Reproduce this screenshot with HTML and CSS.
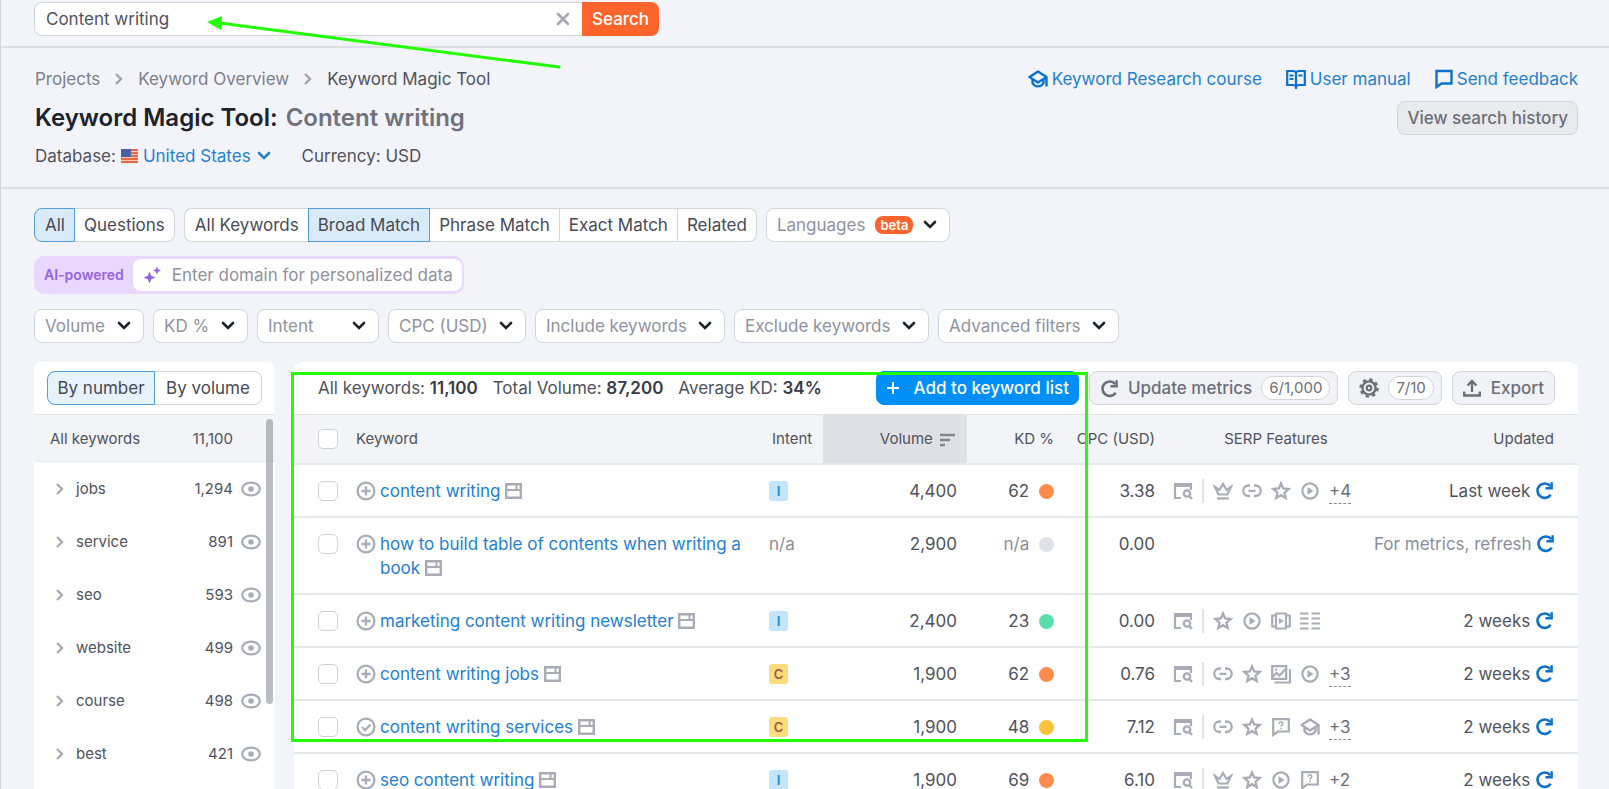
FILE: index.html
```
<!DOCTYPE html>
<html lang="en">
<head>
	<title>Keyword Magic Tool</title>
	<meta charset="utf-8">
	<link rel="stylesheet" href="styles.css">
</head>
<body>
	<!-- icon sprite -->
	<svg class="sprite" aria-hidden="true">
		<symbol id="chevron-right" viewBox="0 0 10 14"><path d="M2 2l5 5-5 5" fill="none" stroke="currentColor" stroke-width="2.400"/></symbol>
		<symbol id="chevron-down" viewBox="0 0 14 10"><path d="M2 2l5 5 5-5" fill="none" stroke="currentColor" stroke-width="2.6" stroke-linecap="round"/></symbol>
		<symbol id="close" viewBox="0 0 14 14"><path d="M2 2l10 10M12 2L2 12" stroke="currentColor" stroke-width="2.6" stroke-linecap="round"/></symbol>
		<symbol id="cap" viewBox="0 0 20 20"><path d="M1.5 8L10 2.500l8.500 5.500L10 13.500z M4.500 10.500v3.500c2.500 4.500 8.500 4.500 11 0v-3.500 M18.500 8v9.500" fill="none" stroke="currentColor" stroke-width="2.4" stroke-linejoin="round"/></symbol>
		<symbol id="book" viewBox="0 0 20 20"><path d="M1.200 2h6.300L10 3l2.500-1h6.300v14h-6.300L10 17l-2.500-1H1.200z M10 3v17" fill="none" stroke="currentColor" stroke-width="2.200"/><path d="M3.500 6.500h4M3.500 10h4M12.500 6.500h4" stroke="currentColor" stroke-width="2"/></symbol>
		<symbol id="bubble" viewBox="0 0 18 20"><path d="M1.500 2h15v12.500H6.500L1.500 18z" fill="none" stroke="currentColor" stroke-width="2.400"/></symbol>
		<symbol id="sparkle" viewBox="0 0 18 18"><path d="M6.500 5.500L8.300 9.700 12.500 11.500 8.300 13.300 6.500 17.500 4.700 13.300 0.500 11.500 4.700 9.700z M14 0.500L15.200 3.300 18 4.500 15.200 5.700 14 8.500 12.800 5.700 10 4.500 12.800 3.300z" fill="currentColor"/></symbol>
		<symbol id="eye" viewBox="0 0 20 16"><ellipse cx="10" cy="8" rx="8.800" ry="6.400" fill="none" stroke="currentColor" stroke-width="2.200"/><circle cx="10" cy="8" r="2.800" fill="currentColor"/></symbol>
		<symbol id="plus" viewBox="0 0 14 14"><path d="M7 1v12M1 7h12" stroke="currentColor" stroke-width="2"/></symbol>
		<symbol id="plus-circle" viewBox="0 0 20 20"><circle cx="10" cy="10" r="8.400" fill="none" stroke="currentColor" stroke-width="2.300"/><path d="M10 5.500v9M5.500 10h9" stroke="currentColor" stroke-width="2.300"/></symbol>
		<symbol id="check-circle" viewBox="0 0 20 20"><circle cx="10" cy="10" r="8.400" fill="none" stroke="currentColor" stroke-width="2.300"/><path d="M6 10l3 3 5.500-5.500" fill="none" stroke="currentColor" stroke-width="2.300"/></symbol>
		<symbol id="serp" viewBox="0 0 17 16"><path d="M1.200 1.200h14.600v13.600H1.200z" fill="none" stroke="currentColor" stroke-width="2.400"/><path d="M1 7h15M11.500 2v4" stroke="currentColor" stroke-width="2"/></symbol>
		<symbol id="refresh" viewBox="0 0 20 20"><path d="M16.500 14.500A7.600 7.600 0 1 1 16 5.300" fill="none" stroke="currentColor" stroke-width="2.800"/><path d="M18.800 1.200v7.800h-7.800v-2.600h5.200V1.200z" fill="currentColor"/></symbol>
		<symbol id="gear" viewBox="0 0 20 20"><circle cx="10" cy="10" r="6.600" fill="none" stroke="currentColor" stroke-width="2.400"/><circle cx="10" cy="10" r="8.500" fill="none" stroke="currentColor" stroke-width="2.400" stroke-dasharray="3.300 3.376"/><circle cx="10" cy="10" r="2.300" fill="none" stroke="currentColor" stroke-width="2.200"/></symbol>
		<symbol id="export" viewBox="0 0 18 18"><path d="M9 13V2.500M4.500 6.500L9 2l4.500 4.500M1.200 12.500v4h15.600v-4" fill="none" stroke="currentColor" stroke-width="2.400"/></symbol>
		<symbol id="sort" viewBox="0 0 16 14"><path d="M1 2h15M1 7h10M1 12h5" stroke="currentColor" stroke-width="2.400"/></symbol>
		<symbol id="serp-view" viewBox="0 0 20 18"><path d="M8 16H2V3h16v5" fill="none" stroke="currentColor" stroke-width="2.200"/><path d="M1 1h18v4H1z" fill="currentColor"/><circle cx="14" cy="11.500" r="3.200" fill="none" stroke="currentColor" stroke-width="2.300"/><path d="M16.300 14l2.700 3" stroke="currentColor" stroke-width="2.400"/></symbol>
		<symbol id="crown" viewBox="0 0 20 20"><path d="M2 6l3.500 7.500h9L18 6l-4.500 3L10 3 6.500 9z" fill="none" stroke="currentColor" stroke-width="2.200"/><path d="M4 17.500h12" stroke="currentColor" stroke-width="2.200"/></symbol>
		<symbol id="link" viewBox="0 0 20 20"><path d="M8 4.500H6.500a5 5 0 0 0 0 10.500H8M12 4.500h1.500a5 5 0 0 1 0 10.500H12M6.500 9.800h7" fill="none" stroke="currentColor" stroke-width="2.300"/></symbol>
		<symbol id="star" viewBox="0 0 20 20"><path d="M10 2.500l2.200 5 5.400.5-4.100 3.600 1.200 5.400L10 14.200 5.300 17l1.200-5.400L2.400 8l5.400-.5z" fill="none" stroke="currentColor" stroke-width="2.300"/></symbol>
		<symbol id="play" viewBox="0 0 20 20"><circle cx="10" cy="10" r="7.600" fill="none" stroke="currentColor" stroke-width="2.200"/><path d="M7.500 6v8l6-4z" fill="currentColor"/></symbol>
		<symbol id="carousel" viewBox="0 0 20 20"><path d="M5 2.500h10v15H5z M5 4.500H1.200v11H5M15 4.500h3.800v11H15" fill="none" stroke="currentColor" stroke-width="2.200" stroke-linejoin="round"/><path d="M8 7v6l5-3z" fill="currentColor"/></symbol>
		<symbol id="rows" viewBox="0 0 20 20"><path d="M0 2.500h8.500M0 7.500h8.500M0 12.500h8.500M0 17.500h8.500M11.500 2.500H20M11.500 7.500H20M11.500 12.500H20M11.500 17.500H20" stroke="currentColor" stroke-width="2.200"/></symbol>
		<symbol id="images" viewBox="0 0 20 20"><path d="M1.200 2.200h14v12.600h-14z M1.500 13l4-4 3 2.500 6-6.500M19 5v13.500H3.500" fill="none" stroke="currentColor" stroke-width="2.200"/><circle cx="5" cy="5.700" r="1.200" fill="currentColor"/></symbol>
		<symbol id="question" viewBox="0 0 20 20"><path d="M2.200 2.200h15.600v12.300H7L2.200 18z" fill="none" stroke="currentColor" stroke-width="2.200"/><path d="M8.200 6.700c0-2.200 3.600-2.200 3.600 0 0 1.400-1.800 1.200-1.800 2.800M10 10.700v1.500" fill="none" stroke="currentColor" stroke-width="1.600"/></symbol>
	</svg>

	<div class="page">
		<form class="search-bar">
			<div class="search-field">
				<input type="text" value="Content writing" aria-label="Keyword">
				<button type="button" class="clear" aria-label="Clear"><svg width="14" height="14"><use href="#close"/></svg></button>
			</div>
			<button type="button" class="search-btn">Search</button>
		</form>

		<header class="header">
			<div class="header-left">
				<nav class="breadcrumbs">
					<a href="#">Projects</a>
					<svg width="10" height="14"><use href="#chevron-right"/></svg>
					<a href="#">Keyword Overview</a>
					<svg width="10" height="14"><use href="#chevron-right"/></svg>
					<span class="current">Keyword Magic Tool</span>
				</nav>
				<h1>Keyword Magic Tool: <span>Content writing</span></h1>
				<div class="meta">
					<div class="database">
						Database:
						<svg class="flag" width="17" height="14" viewBox="0 0 17 14"><rect width="17" height="14" fill="#f7c9bb"/><path d="M0 1h17M0 4h17M0 7h17M0 10h17M0 13h17" stroke="#e9683f" stroke-width="1.800"/><rect width="10" height="8" fill="#4a5fa5"/></svg>
						<button class="country">United States <svg width="14" height="10"><use href="#chevron-down"/></svg></button>
					</div>
					<div>Currency: USD</div>
				</div>
			</div>
			<div class="header-right">
				<div class="help-links">
					<a href="#"><svg width="20" height="20"><use href="#cap"/></svg>Keyword Research course</a>
					<a href="#"><svg width="20" height="20"><use href="#book"/></svg>User manual</a>
					<a href="#"><svg width="18" height="20"><use href="#bubble"/></svg>Send feedback</a>
				</div>
				<button class="btn history">View search history</button>
			</div>
		</header>

		<main class="content">
			<div class="filters">
				<div class="segment">
					<button class="active">All</button>
					<button>Questions</button>
				</div>
				<div class="segment">
					<button>All Keywords</button>
					<button class="active">Broad Match</button>
					<button>Phrase Match</button>
					<button>Exact Match</button>
					<button>Related</button>
				</div>
				<button class="languages">Languages <span class="beta">beta</span> <svg width="14" height="10"><use href="#chevron-down"/></svg></button>
			</div>

			<div class="ai-box">
				<label for="domain">AI-powered</label>
				<div class="ai-input">
					<svg width="18" height="18"><use href="#sparkle"/></svg>
					<input type="text" id="domain" placeholder="Enter domain for personalized data">
				</div>
			</div>

			<div class="filters selects">
				<select aria-label="Volume"><option>Volume</option></select>
				<select aria-label="KD %"><option>KD %</option></select>
				<select aria-label="Intent" class="wide"><option>Intent</option></select>
				<select aria-label="CPC (USD)"><option>CPC (USD)</option></select>
				<select aria-label="Include keywords"><option>Include keywords</option></select>
				<select aria-label="Exclude keywords"><option>Exclude keywords</option></select>
				<select aria-label="Advanced filters"><option>Advanced filters</option></select>
			</div>

			<div class="columns">
				<aside class="panel groups">
					<div class="groups-top">
						<div class="segment">
							<button class="active">By number</button>
							<button>By volume</button>
						</div>
					</div>
					<div class="groups-all"><span>All keywords</span><span>11,100</span></div>
					<ul>
						<li><svg width="10" height="14"><use href="#chevron-right"/></svg><span class="name">jobs</span><span>1,294</span><svg width="20" height="16"><use href="#eye"/></svg></li>
						<li><svg width="10" height="14"><use href="#chevron-right"/></svg><span class="name">service</span><span>891</span><svg width="20" height="16"><use href="#eye"/></svg></li>
						<li><svg width="10" height="14"><use href="#chevron-right"/></svg><span class="name">seo</span><span>593</span><svg width="20" height="16"><use href="#eye"/></svg></li>
						<li><svg width="10" height="14"><use href="#chevron-right"/></svg><span class="name">website</span><span>499</span><svg width="20" height="16"><use href="#eye"/></svg></li>
						<li><svg width="10" height="14"><use href="#chevron-right"/></svg><span class="name">course</span><span>498</span><svg width="20" height="16"><use href="#eye"/></svg></li>
						<li><svg width="10" height="14"><use href="#chevron-right"/></svg><span class="name">best</span><span>421</span><svg width="20" height="16"><use href="#eye"/></svg></li>
					</ul>
					<div class="scrollbar"></div>
				</aside>

				<section class="panel results">
					<div class="toolbar">
						<div class="totals">
							<span>All keywords: <b>11,100</b></span>
							<span>Total Volume: <b>87,200</b></span>
							<span>Average KD: <b>34%</b></span>
						</div>
						<div class="actions">
							<button class="btn primary"><svg width="14" height="14"><use href="#plus"/></svg>Add to keyword list</button>
							<button class="btn with-count"><svg width="19" height="19"><use href="#refresh"/></svg>Update metrics <span class="count">6/1,000</span></button>
							<button class="btn with-count" aria-label="Columns"><svg width="20" height="20"><use href="#gear"/></svg><span class="count">7/10</span></button>
							<button class="btn"><svg width="18" height="18"><use href="#export"/></svg>Export</button>
						</div>
					</div>

					<table>
						<colgroup>
							<col class="c-check"><col><col class="c-intent"><col class="c-volume"><col class="c-kd"><col class="c-cpc"><col class="c-serp"><col class="c-updated">
						</colgroup>
						<thead>
							<tr>
								<th class="check"><input type="checkbox" aria-label="Select all"></th>
								<th>Keyword</th>
								<th class="th-intent">Intent</th>
								<th class="num sorted">Volume <svg width="16" height="14"><use href="#sort"/></svg></th>
								<th class="kd">KD %</th>
								<th class="kd">CPC (USD)</th>
								<th class="th-serp">SERP Features</th>
								<th class="updated">Updated</th>
							</tr>
						</thead>
						<tbody>
							<tr>
								<td class="check"><input type="checkbox" aria-label="Select content writing"></td>
								<td><div class="kw"><svg width="20" height="20"><use href="#plus-circle"/></svg><span><a href="#">content writing</a> <svg class="page-icon" width="17" height="16"><use href="#serp"/></svg></span></div></td>
								<td><span class="intent">I</span></td>
								<td class="num">4,400</td>
								<td class="kd">62 <i class="dot hard"></i></td>
								<td class="kd">3.38</td>
								<td><div class="serp"><svg width="20" height="18"><use href="#serp-view"/></svg><span class="sep"></span><svg><use href="#crown"/></svg><svg><use href="#link"/></svg><svg><use href="#star"/></svg><svg><use href="#play"/></svg><span class="more">+4</span></div></td>
								<td class="updated">Last week <svg width="19" height="19"><use href="#refresh"/></svg></td>
							</tr>
							<tr>
								<td class="check"><input type="checkbox" aria-label="Select how to build table of contents"></td>
								<td><div class="kw"><svg width="20" height="20"><use href="#plus-circle"/></svg><span><a href="#">how to build table of contents when writing a book</a> <svg class="page-icon" width="17" height="16"><use href="#serp"/></svg></span></div></td>
								<td class="muted">n/a</td>
								<td class="num">2,900</td>
								<td class="kd muted">n/a <i class="dot"></i></td>
								<td class="kd">0.00</td>
								<td></td>
								<td class="updated muted">For metrics, refresh <svg width="19" height="19"><use href="#refresh"/></svg></td>
							</tr>
							<tr>
								<td class="check"><input type="checkbox" aria-label="Select marketing content writing newsletter"></td>
								<td><div class="kw"><svg width="20" height="20"><use href="#plus-circle"/></svg><span><a href="#">marketing content writing newsletter</a> <svg class="page-icon" width="17" height="16"><use href="#serp"/></svg></span></div></td>
								<td><span class="intent">I</span></td>
								<td class="num">2,400</td>
								<td class="kd">23 <i class="dot easy"></i></td>
								<td class="kd">0.00</td>
								<td><div class="serp"><svg width="20" height="18"><use href="#serp-view"/></svg><span class="sep"></span><svg><use href="#star"/></svg><svg><use href="#play"/></svg><svg><use href="#carousel"/></svg><svg><use href="#rows"/></svg></div></td>
								<td class="updated">2 weeks <svg width="19" height="19"><use href="#refresh"/></svg></td>
							</tr>
							<tr>
								<td class="check"><input type="checkbox" aria-label="Select content writing jobs"></td>
								<td><div class="kw"><svg width="20" height="20"><use href="#plus-circle"/></svg><span><a href="#">content writing jobs</a> <svg class="page-icon" width="17" height="16"><use href="#serp"/></svg></span></div></td>
								<td><span class="intent commercial">C</span></td>
								<td class="num">1,900</td>
								<td class="kd">62 <i class="dot hard"></i></td>
								<td class="kd">0.76</td>
								<td><div class="serp"><svg width="20" height="18"><use href="#serp-view"/></svg><span class="sep"></span><svg><use href="#link"/></svg><svg><use href="#star"/></svg><svg><use href="#images"/></svg><svg><use href="#play"/></svg><span class="more">+3</span></div></td>
								<td class="updated">2 weeks <svg width="19" height="19"><use href="#refresh"/></svg></td>
							</tr>
							<tr>
								<td class="check"><input type="checkbox" aria-label="Select content writing services"></td>
								<td><div class="kw"><svg width="20" height="20"><use href="#check-circle"/></svg><span><a href="#">content writing services</a> <svg class="page-icon" width="17" height="16"><use href="#serp"/></svg></span></div></td>
								<td><span class="intent commercial">C</span></td>
								<td class="num">1,900</td>
								<td class="kd">48 <i class="dot possible"></i></td>
								<td class="kd">7.12</td>
								<td><div class="serp"><svg width="20" height="18"><use href="#serp-view"/></svg><span class="sep"></span><svg><use href="#link"/></svg><svg><use href="#star"/></svg><svg><use href="#question"/></svg><svg><use href="#cap"/></svg><span class="more">+3</span></div></td>
								<td class="updated">2 weeks <svg width="19" height="19"><use href="#refresh"/></svg></td>
							</tr>
							<tr>
								<td class="check"><input type="checkbox" aria-label="Select seo content writing"></td>
								<td><div class="kw"><svg width="20" height="20"><use href="#plus-circle"/></svg><span><a href="#">seo content writing</a> <svg class="page-icon" width="17" height="16"><use href="#serp"/></svg></span></div></td>
								<td><span class="intent">I</span></td>
								<td class="num">1,900</td>
								<td class="kd">69 <i class="dot hard"></i></td>
								<td class="kd">6.10</td>
								<td><div class="serp"><svg width="20" height="18"><use href="#serp-view"/></svg><span class="sep"></span><svg><use href="#crown"/></svg><svg><use href="#star"/></svg><svg><use href="#play"/></svg><svg><use href="#question"/></svg><span class="more">+2</span></div></td>
								<td class="updated">2 weeks <svg width="19" height="19"><use href="#refresh"/></svg></td>
							</tr>
						</tbody>
					</table>
					<div class="highlight"></div>
				</section>
			</div>
		</main>

		<svg class="arrow" width="360" height="60" viewBox="0 0 360 60" aria-hidden="true">
			<path d="M14 9L353 53" stroke="#2f0" stroke-width="3" stroke-linecap="round"/>
			<path d="M1 8l15-6-1 14z" fill="#2f0"/>
		</svg>
	</div>
</body>
</html>
```
FILE: styles.css
```
* {
	box-sizing: border-box;
}
body {
	margin: 0;
	font-family: Inter, "Liberation Sans", sans-serif;
	font-size: 17px;
	line-height: 24px;
	color: #50525c;
	background: #f3f4f9;
}
button, input, select {
	font: inherit;
	color: inherit;
}
button {
	cursor: pointer;
}
a {
	color: #2380d3;
	text-decoration: none;
}
svg {
	flex: none;
}
.sprite {
	position: absolute;
	width: 0;
	height: 0;
}
.page {
	position: relative;
	height: 100vh;
	overflow: hidden;
	border-left: 1px solid #d3d5dc;
	display: flex;
	flex-direction: column;
}

/* search */
.search-bar {
	display: flex;
	padding: 2px 33px 10px;
	border-bottom: 2px solid #dcdee5;
}
.search-field {
	display: flex;
	align-items: center;
	width: 548px;
	height: 34px;
	padding: 0 12px 0 11px;
	background: #fff;
	border: 1px solid #d3d5dd;
	border-right: 0;
	border-radius: 8px 0 0 8px;
}
.search-field input {
	flex: 1;
	min-width: 0;
	padding: 0;
	border: 0;
	outline: none;
	background: none;
}
.clear {
	display: flex;
	padding: 0;
	border: 0;
	background: none;
	color: #a3a5b1;
}
.search-btn {
	padding: 0 10px;
	border: 0;
	border-radius: 0 8px 8px 0;
	background: #ff642d;
	color: #fff;
	font-weight: 500;
}

/* header */
.header {
	display: flex;
	justify-content: space-between;
	padding: 19px 31px 19px 34px;
	border-bottom: 2px solid #dcdee5;
}
.breadcrumbs {
	display: flex;
	align-items: center;
	gap: 14px;
	color: #a0a3ae;
}
.breadcrumbs a {
	color: #7c7f8a;
}
.breadcrumbs .current {
	color: #50525c;
}
h1 {
	margin: 11px 0 10px;
	font-size: 24px;
	line-height: 32px;
	font-weight: 600;
	color: #20222b;
}
h1 span {
	margin-left: 2px;
	color: #6f727d;
}
.meta {
	display: flex;
	gap: 31px;
}
.database {
	display: flex;
	align-items: center;
	gap: 5px;
}
.country {
	display: flex;
	align-items: center;
	gap: 6px;
	padding: 0;
	border: 0;
	background: none;
	color: #2380d3;
}
.header-right {
	display: flex;
	flex-direction: column;
	align-items: flex-end;
	gap: 10px;
}
.help-links {
	display: flex;
	gap: 24px;
}
.help-links a {
	display: flex;
	align-items: center;
	gap: 4px;
}
.help-links svg {
	color: #0b71cc;
}
.btn {
	display: flex;
	align-items: center;
	height: 34px;
	gap: 10px;
	padding: 0 10px;
	border: 1px solid #d3d5dc;
	border-radius: 8px;
	background: #f1f2f6;
	color: #6c6e79;
	font-weight: 500;
	white-space: nowrap;
}
.btn.history {
	padding: 0 9px;
	background: #e9eaee;
}
.btn.primary {
	padding: 0 9px;
	background: #008ff8;
	border-color: #008ff8;
	color: #fff;
	gap: 14px;
}
.btn.with-count {
	gap: 9px;
	padding-right: 7px;
}

/* filters */
.content {
	flex: 1;
	min-height: 0;
	display: flex;
	flex-direction: column;
	padding: 19px 31px 0 33px;
}
.filters {
	display: flex;
	gap: 9px;
}
.segment {
	display: flex;
}
.segment button {
	height: 34px;
	padding: 0 9px;
	border: 1px solid #d3d5dd;
	border-left: 0;
	background: #fff;
	color: #484a54;
	white-space: nowrap;
}
.filters .segment button:first-child {
	padding-left: 10px;
}
.segment button:first-child {
	border-left: 1px solid #d3d5dd;
	border-radius: 8px 0 0 8px;
}
.segment button:last-child {
	border-radius: 0 8px 8px 0;
}
.segment .active, .segment .active:first-child {
	border: 1px solid #4f9fe0;
	background: #d9ebf9;
}
.segment button:has(+ .active) {
	border-right: 0;
}
.languages {
	display: flex;
	align-items: center;
	gap: 10px;
	height: 34px;
	padding: 0 12px 0 10px;
	border: 1px solid #d3d5dd;
	border-radius: 8px;
	background: #fff;
	color: #8f929e;
}
.languages svg {
	color: #20222b;
}
.beta {
	padding: 0 5px;
	border-radius: 8px;
	background: #ff642d;
	color: #fff;
	font-size: 13px;
	font-weight: 600;
	line-height: 18px;
}
.ai-box {
	align-self: flex-start;
	display: flex;
	align-items: center;
	margin: 14px 0 15px;
	padding: 3px 2px 3px 10px;
	border-radius: 10px;
	background: #ead7fe;
}
.ai-box label {
	margin-right: 9px;
	font-size: 14px;
	font-weight: 600;
	color: #9565e3;
}
.ai-input {
	display: flex;
	align-items: center;
	gap: 11px;
	height: 32px;
	padding: 0 10px;
	border-radius: 8px;
	background: #fff;
	color: #9565e3;
}
.ai-input input {
	width: 280px;
	padding: 0;
	border: 0;
	outline: none;
	background: none;
}
.ai-input input::placeholder {
	color: #8f929e;
}
.selects select {
	appearance: none;
	height: 34px;
	padding: 0 37px 0 10px;
	border: 1px solid #d3d5dd;
	border-radius: 8px;
	background: #fff url("data:image/svg+xml,%3Csvg xmlns='http://www.w3.org/2000/svg' width='14' height='10' viewBox='0 0 14 10'%3E%3Cpath d='M2 2l5 5 5-5' fill='none' stroke='%2320222b' stroke-width='2.6' stroke-linecap='round'/%3E%3C/svg%3E") no-repeat right 12px center;
	color: #8f929e;
}
.selects .wide {
	padding-right: 64px;
}

/* panels */
.columns {
	flex: 1;
	min-height: 0;
	display: flex;
	gap: 19px;
	margin-top: 19px;
}
.panel {
	position: relative;
	background: #fff;
	border-radius: 8px 8px 0 0;
}
.groups {
	width: 241px;
	flex: none;
	font-size: 15px;
}
.groups-top {
	padding: 9px 13px;
	border-bottom: 1px solid #e3e4ea;
}
.groups-top .segment {
	font-size: 17px;
}
.groups-top button {
	flex: 1;
	padding: 0;
}
.groups-top .active, .groups-top .active:first-child {
	background: #e6f3fd;
}
.groups-all {
	display: flex;
	justify-content: space-between;
	padding: 12px 42px 10px 16px;
	background: #f3f4f8;
	border-bottom: 1px solid #e9eaef;
}
.groups ul {
	list-style: none;
	margin: 0;
	padding: 0;
}
.groups li {
	display: flex;
	align-items: center;
	height: 53px;
	padding: 0 14px 0 21px;
}
.groups li svg {
	color: #a9abb6;
}
.groups .name {
	flex: 1;
	margin-left: 11px;
}
.groups li svg:last-child {
	margin-left: 8px;
}
.scrollbar {
	position: absolute;
	top: 57px;
	right: 2px;
	width: 7px;
	height: 285px;
	border-radius: 4px;
	background: rgba(140, 143, 153, 0.6);
}
.results {
	flex: 1;
	min-width: 0;
}
.toolbar {
	display: flex;
	justify-content: space-between;
	align-items: center;
	padding: 9px 23px 9px 24px;
	border-bottom: 1px solid #e3e4ea;
}
.totals {
	display: flex;
	gap: 15px;
	white-space: nowrap;
}
.totals b {
	font-weight: 600;
	color: #383a44;
}
.actions {
	display: flex;
	gap: 10px;
}
.count {
	padding: 0 7px;
	border: 1px solid #d3d5dc;
	border-radius: 12px;
	background: #fff;
	font-size: 15px;
	font-weight: 400;
	line-height: 22px;
}

/* table */
table {
	width: 100%;
	table-layout: fixed;
	border-collapse: collapse;
}
.c-check { width: 62px; }
.c-intent { width: 54px; }
.c-volume { width: 144px; }
.c-kd { width: 87px; }
.c-cpc { width: 101px; }
.c-serp { width: 219px; }
.c-updated { width: 204px; }
th {
	height: 49px;
	padding: 0;
	background: #f3f4f8;
	border-bottom: 2px solid #e7e8ee;
	font-size: 15px;
	font-weight: 400;
	text-align: left;
	white-space: nowrap;
}
td {
	padding: 14px 0 13px;
	border-bottom: 2px solid #e7e8ee;
	vertical-align: top;
}
th svg, .updated svg {
	vertical-align: middle;
}
th.th-intent {
	padding-left: 3px;
}
th.sorted {
	padding-right: 12px;
	background: #dfe0e6;
}
th.sorted svg {
	margin-left: 2px;
	color: #83868f;
}
th.th-serp {
	padding-left: 23px;
	text-align: center;
}
.num {
	padding-right: 10px;
	text-align: right;
}
.kd {
	text-align: right;
}
.check {
	padding-left: 24px;
}
.check input {
	appearance: none;
	display: block;
	width: 20px;
	height: 20px;
	margin: 2px 0;
	border: 1px solid #cfd1da;
	border-radius: 5px;
	background: #fff;
}
.kw {
	display: flex;
	gap: 4px;
	padding-right: 12px;
}
.kw svg {
	margin-top: 2px;
	color: #a9abb6;
}
.kw .page-icon {
	margin: 0;
	vertical-align: -2px;
}
.intent {
	display: block;
	width: 19px;
	margin: 2px 0;
	border-radius: 3px;
	background: #c4e5fe;
	color: #2380d3;
	font-size: 13px;
	font-weight: 600;
	line-height: 20px;
	text-align: center;
}
.intent.commercial {
	background: #fddc7e;
	color: #a3573a;
}
.dot {
	display: inline-block;
	width: 15px;
	height: 15px;
	margin-left: 5px;
	border-radius: 50%;
	background: #e0e1e9;
	vertical-align: -2px;
}
.dot.hard { background: #ff8c4f; }
.dot.easy { background: #59ddaa; }
.dot.possible { background: #fdc23c; }
.serp {
	display: flex;
	align-items: center;
	gap: 9px;
	height: 24px;
	padding-left: 18px;
	color: #a9abb6;
}
.serp svg {
	width: 20px;
	height: 20px;
}
.sep {
	width: 2px;
	height: 24px;
	background: #e0e1e9;
}
.more {
	line-height: 24px;
	color: #6c6e79;
	border-bottom: 1px dashed #8a8d98;
}
.updated {
	padding-right: 24px;
	text-align: right;
	white-space: nowrap;
}
.updated svg {
	margin-top: -4px;
	color: #0b71cc;
}
.muted {
	color: #8a8d98;
}

/* annotations on top of the page */
.highlight {
	position: absolute;
	top: 10px;
	left: -3px;
	width: 797px;
	height: 370px;
	border: 3px solid #2f0;
	pointer-events: none;
}
.arrow {
	position: absolute;
	top: 14px;
	left: 205px;
	pointer-events: none;
}
```
